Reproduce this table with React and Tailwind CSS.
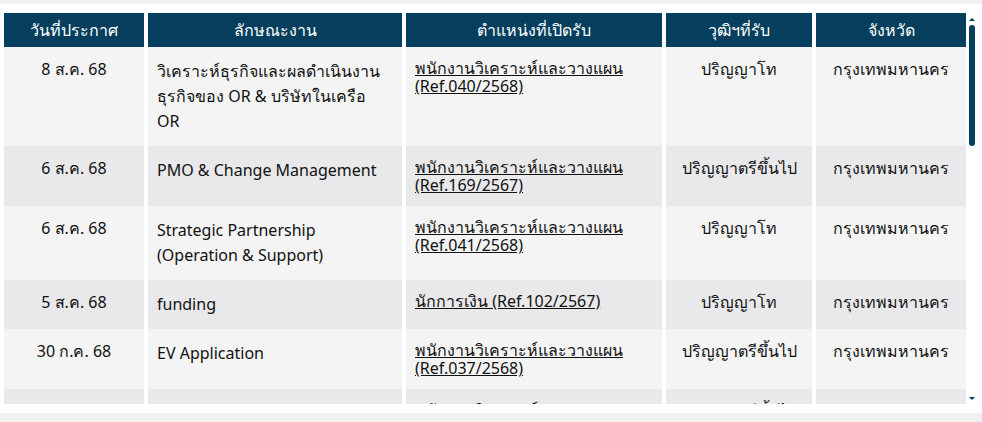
import React from 'react'

const headers = ['วันที่ประกาศ', 'ลักษณะงาน', 'ตำแหน่งที่เปิดรับ', 'วุฒิฯที่รับ', 'จังหวัด']

// each title / position is split into the lines shown in the listing
const jobs = [
  { date: '8 ส.ค. 68', title: ['วิเคราะห์ธุรกิจและผลดำเนินงาน', 'ธุรกิจของ OR & บริษัทในเครือ', 'OR'], pos: ['พนักงานวิเคราะห์และวางแผน', '(Ref.040/2568)'], edu: 'ปริญญาโท' },
  { date: '6 ส.ค. 68', title: ['PMO & Change Management'], pos: ['พนักงานวิเคราะห์และวางแผน', '(Ref.169/2567)'], edu: 'ปริญญาตรีขึ้นไป' },
  { date: '6 ส.ค. 68', title: ['Strategic Partnership', '(Operation & Support)'], pos: ['พนักงานวิเคราะห์และวางแผน', '(Ref.041/2568)'], edu: 'ปริญญาโท' },
  { date: '5 ส.ค. 68', title: ['funding'], pos: ['นักการเงิน (Ref.102/2567)'], edu: 'ปริญญาโท' },
  { date: '30 ก.ค. 68', title: ['EV Application'], pos: ['พนักงานวิเคราะห์และวางแผน', '(Ref.037/2568)'], edu: 'ปริญญาตรีขึ้นไป' },
  { date: '29 ก.ค. 68', title: ['Data Analytics'], pos: ['พนักงานวิเคราะห์และวางแผน', '(Ref.036/2568)'], edu: 'ปริญญาตรีขึ้นไป' },
  { date: '25 ก.ค. 68', title: ['บริหารความเสี่ยงองค์กร'], pos: ['พนักงานวิเคราะห์และวางแผน', '(Ref.035/2568)'], edu: 'ปริญญาโท' },
  { date: '24 ก.ค. 68', title: ['Retail Business Development'], pos: ['พนักงานพัฒนาธุรกิจ', '(Ref.034/2568)'], edu: 'ปริญญาตรีขึ้นไป' },
  { date: '22 ก.ค. 68', title: ['บัญชีบริหาร'], pos: ['นักบัญชี (Ref.033/2568)'], edu: 'ปริญญาตรีขึ้นไป' },
  { date: '18 ก.ค. 68', title: ['Digital Marketing'], pos: ['พนักงานการตลาด', '(Ref.032/2568)'], edu: 'ปริญญาตรีขึ้นไป' },
  { date: '15 ก.ค. 68', title: ['Procurement'], pos: ['พนักงานจัดหา (Ref.031/2568)'], edu: 'ปริญญาตรีขึ้นไป' },
  { date: '11 ก.ค. 68', title: ['Legal Counsel'], pos: ['นิติกร (Ref.030/2568)'], edu: 'ปริญญาโท' },
  { date: '9 ก.ค. 68', title: ['Human Resources', 'Business Partner'], pos: ['พนักงานบริหารทรัพยากรบุคคล', '(Ref.029/2568)'], edu: 'ปริญญาตรีขึ้นไป' },
  { date: '4 ก.ค. 68', title: ['Supply Chain Planning'], pos: ['พนักงานวิเคราะห์และวางแผน', '(Ref.028/2568)'], edu: 'ปริญญาตรีขึ้นไป' },
  { date: '1 ก.ค. 68', title: ['Internal Audit'], pos: ['ผู้ตรวจสอบภายใน', '(Ref.027/2568)'], edu: 'ปริญญาตรีขึ้นไป' },
]

// thin scrollbar drawn by hand (dark thumb + small arrows)
function ScrollBar() {
  return (
    <div className="flex h-full w-[11px] flex-col items-center">
      <div className="flex h-[12px] w-full items-center justify-center">
        <div className="h-0 w-0 border-x-[3px] border-b-[3px] border-x-transparent border-b-[#063f5e]" />
      </div>
      <div className="h-[121px] w-[6px] rounded-full bg-[#063f5e]" />
      <div className="flex-1" />
      <div className="flex h-[12px] w-full items-center justify-center">
        <div className="h-0 w-0 border-x-[3px] border-t-[3px] border-x-transparent border-t-[#063f5e]" />
      </div>
    </div>
  )
}

export default function App() {
  return (
    <div className="min-h-screen bg-[#f0f1f0] pt-1 font-['Noto_Sans',sans-serif] text-[#111]">
      <div className="flex bg-white pt-[9px] pb-[9px] pr-[5px]">
        <div className="h-[391px] flex-1 overflow-hidden">
          <div className="grid grid-cols-[140px_254px_256px_146px_150px] gap-x-1 pl-1 text-[16px]">
            {headers.map((h) => (
              <div
                key={h}
                className="flex h-[34px] items-center justify-center bg-[#063f5e] font-medium text-white"
              >
                {h}
              </div>
            ))}

            {jobs.map((job, i) => {
              const bg = i % 2 === 0 ? 'bg-[#f4f4f4]' : 'bg-[#e9e9eb]'
              return (
                <React.Fragment key={i}>
                  <div className={`${bg} py-3 text-center leading-[20px]`}>{job.date}</div>
                  <div className={`${bg} py-3 px-[9px] leading-[25px]`}>
                    {job.title.map((t, k) => (
                      <div key={k}>{t}</div>
                    ))}
                  </div>
                  <div className={`${bg} py-3 px-[9px] leading-[18px]`}>
                    <a href="#" className="underline">
                      {job.pos.map((p, k) => (
                        <span key={k} className="block">{p}</span>
                      ))}
                    </a>
                  </div>
                  <div className={`${bg} py-3 text-center leading-[20px]`}>{job.edu}</div>
                  <div className={`${bg} py-3 text-center leading-[20px]`}>กรุงเทพมหานคร</div>
                </React.Fragment>
              )
            })}
          </div>
        </div>
        <div className="h-[391px]">
          <ScrollBar />
        </div>
      </div>
    </div>
  )
}
